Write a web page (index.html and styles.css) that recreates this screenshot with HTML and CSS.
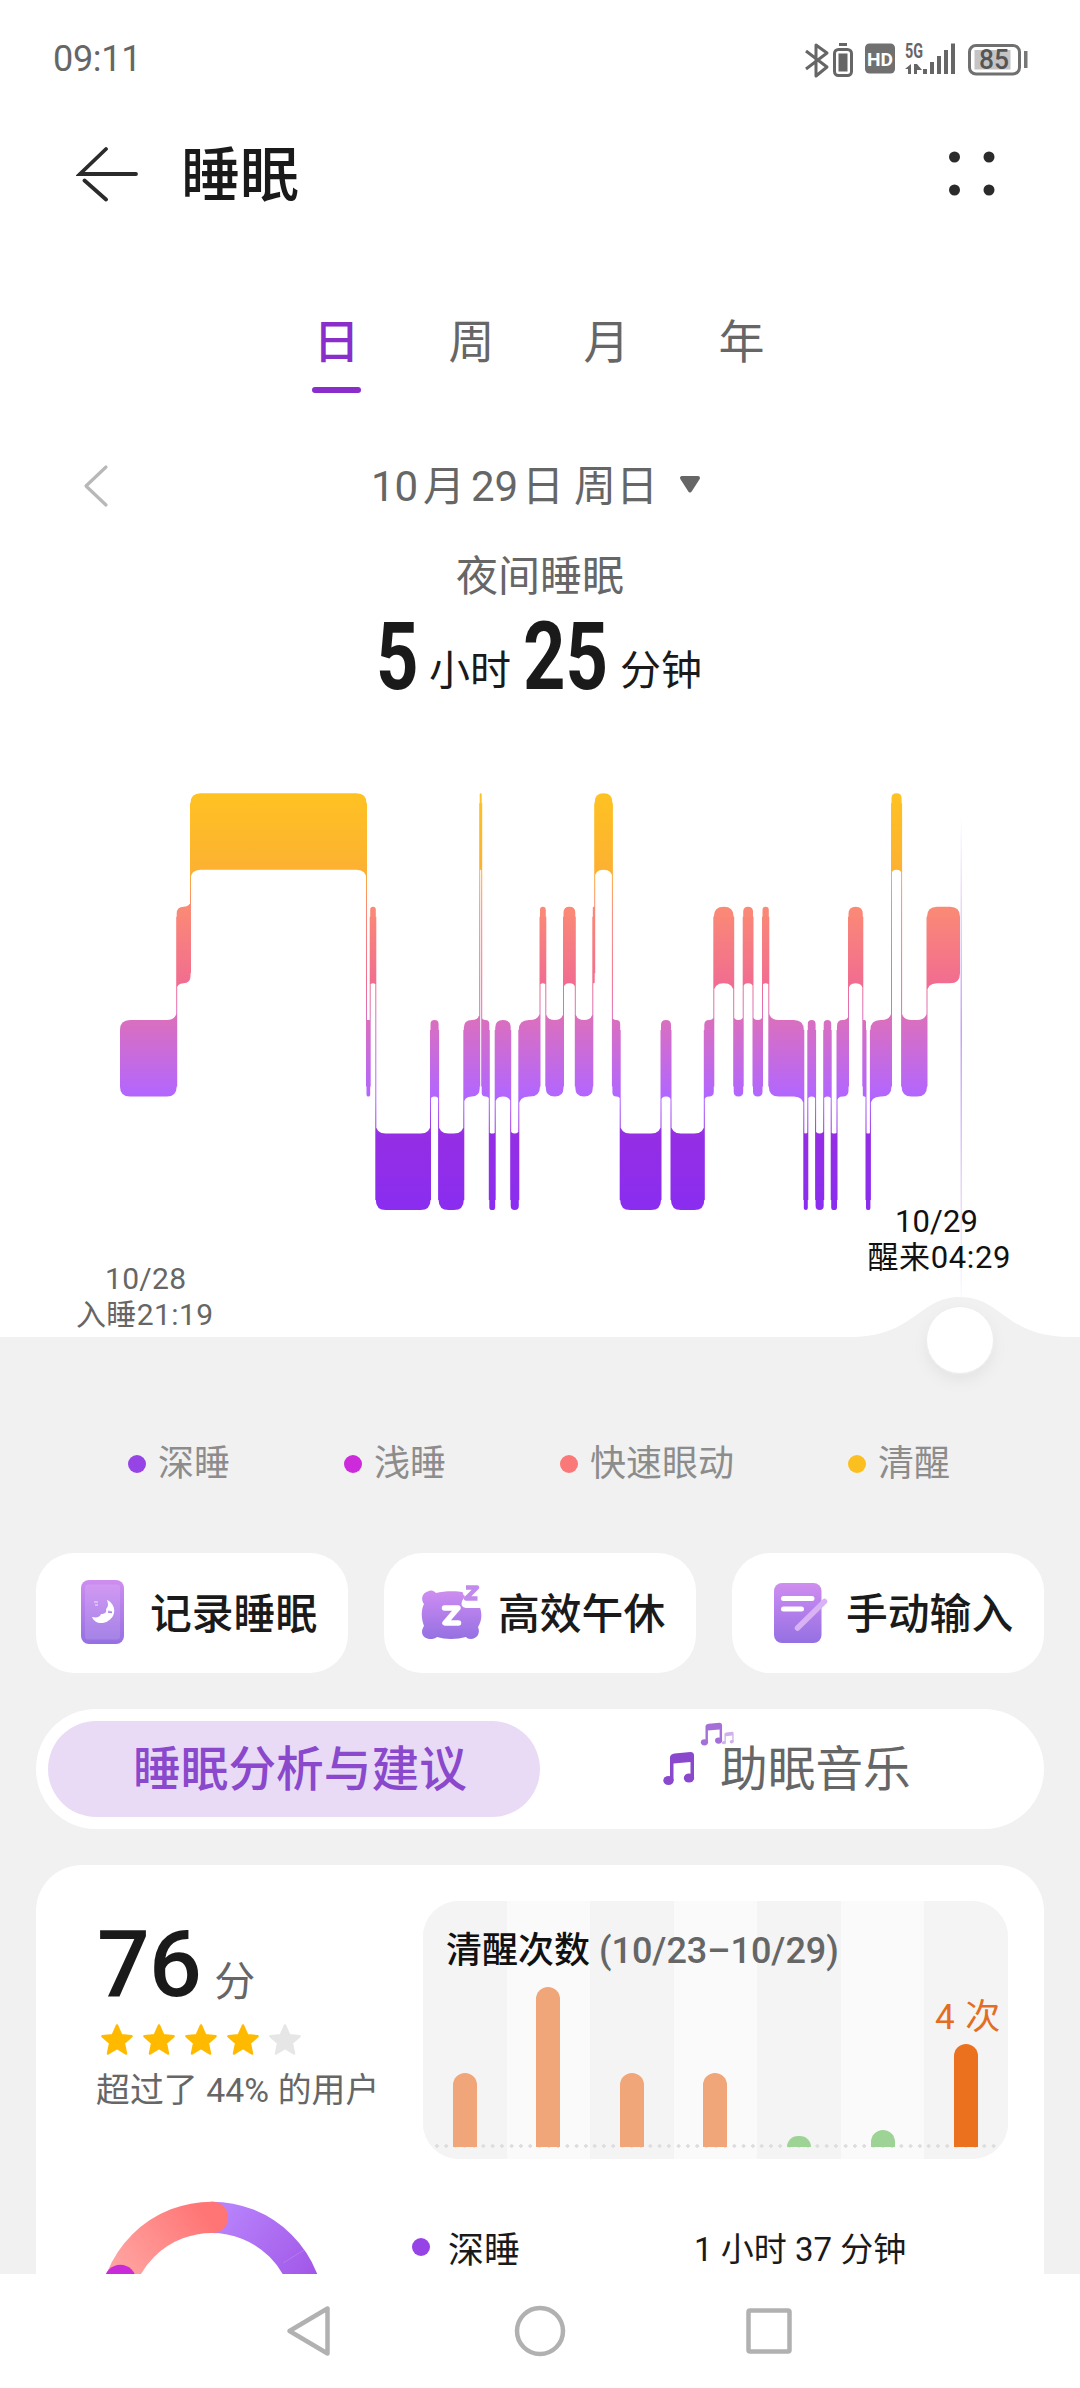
FILE: index.html
```html
<!DOCTYPE html>
<html lang="zh-CN">
<head>
<meta charset="utf-8">
<title>睡眠</title>
<link rel="stylesheet" href="styles.css">
</head>
<body>
<div class="app">
  <div class="screen">
    <header class="status">
      <span class="clock">09:11</span>
      <svg class="status-icons" width="226" height="60" viewBox="803 30 226 60">
        <g fill="none" stroke="#666" stroke-width="3" stroke-linejoin="round">
          <path d="M806 51l21 16-11 9V45l11 8-21 16"/>
          <rect x="834.5" y="49.500" width="17" height="26" rx="4"/>
          <rect x="969.500" y="45.500" width="50" height="28.500" rx="6.500" stroke="#707070"/>
        </g>
        <g fill="#666">
          <rect x="839" y="43" width="8" height="3"/>
          <rect x="838.500" y="53.500" width="9" height="18"/>
          <rect x="865" y="43.500" width="30" height="30" rx="4.500" fill="#707070"/>
          <path d="M911 64v10h-3v-5h-3zM914 64h3l5 6h-5v4h-3z"/>
          <rect x="923" y="69" width="4" height="5"/>
          <rect x="930" y="62" width="4" height="12"/>
          <rect x="937" y="56" width="4" height="18"/>
          <rect x="944" y="50" width="4" height="24"/>
          <rect x="951" y="43.500" width="4" height="30.500"/>
          <rect x="1024" y="51" width="3.500" height="17" fill="#777"/>
        </g>
        <rect x="974.500" y="50" width="36" height="19.500" fill="#c4c4c4"/>
        <text class="t-hd" x="867" y="65.500" textLength="26" lengthAdjust="spacingAndGlyphs">HD</text>
        <text class="t-5g" x="905" y="57.500" textLength="18" lengthAdjust="spacingAndGlyphs">5G</text>
        <text class="t-bat" x="979" y="69" textLength="30" lengthAdjust="spacingAndGlyphs">85</text>
      </svg>
    </header>

    <div class="titlebar">
      <svg width="64" height="60" viewBox="76 144 64 60" fill="none" stroke="#2b2b2b" stroke-width="3.800" stroke-linecap="round">
        <path d="M106 149L80 174H136M84.500 180.500L106 199.500"/>
      </svg>
      <h1>睡眠</h1>
      <svg class="more" width="48" height="48" viewBox="948 150 48 48" fill="#2b2b2b">
        <circle cx="954.500" cy="157" r="5.500"/><circle cx="989" cy="157" r="5.500"/>
        <circle cx="954.500" cy="190" r="5.500"/><circle cx="989" cy="190" r="5.500"/>
      </svg>
    </div>

    <nav class="tabs">
      <span class="tab on">日</span><span class="tab">周</span><span class="tab">月</span><span class="tab">年</span>
    </nav>

    <div class="date-row">
      <svg width="28" height="44" viewBox="82 464 28 44" fill="none" stroke="#b8b8b8" stroke-width="3.200" stroke-linecap="round" stroke-linejoin="round"><path d="M106 467L86 486L106 505"/></svg>
      <div class="date"><span>10</span><span>月</span><span>29</span><span>日</span><span class="wk">周日</span></div>
      <svg width="24" height="18" viewBox="0 0 24 18"><path d="M4 2H20L12 14.500z" fill="#666" stroke="#666" stroke-width="4" stroke-linejoin="round"/></svg>
    </div>

    <p class="kind">夜间睡眠</p>
    <div class="duration"><b class="n1">5</b><span class="u1">小时</span><b class="n2">25</b><span>分钟</span></div>

    <svg class="hypno" width="1080" height="630" viewBox="0 780 1080 630">
      <defs>
        <linearGradient id="stage" gradientUnits="userSpaceOnUse" x1="0" y1="793" x2="0" y2="1210">
          <stop offset="0" stop-color="#ffc222"/>
          <stop offset=".185" stop-color="#fcb132"/>
          <stop offset=".274" stop-color="#fb8a75"/>
          <stop offset=".456" stop-color="#f16d90"/>
          <stop offset=".545" stop-color="#da6fbf"/>
          <stop offset=".727" stop-color="#b266ff"/>
          <stop offset=".818" stop-color="#952ee4"/>
          <stop offset="1" stop-color="#8a2df0"/>
        </linearGradient>
        <linearGradient id="cursor" x1="0" y1="0" x2="0" y2="1">
          <stop offset="0" stop-color="#b58cf0" stop-opacity="0"/>
          <stop offset=".45" stop-color="#b58cf0" stop-opacity=".8"/>
          <stop offset="1" stop-color="#b58cf0" stop-opacity=".05"/>
        </linearGradient>
        <filter id="soft" x="-50%" y="-50%" width="200%" height="200%"><feDropShadow dx="0" dy="7" stdDeviation="7" flood-opacity=".05"/></filter>
      </defs>
      <path fill="#f1f1f1" d="M0 1337H850C915 1337 918 1297 960 1297S1005 1337 1070 1337H1080V1410H0z"/>
      <g id="stages" fill="url(#stage)"></g>
      <rect x="960.500" y="815" width="1.500" height="482" fill="url(#cursor)"/>
      <circle cx="960" cy="1340" r="33.500" fill="#fff" stroke="#ececec" filter="url(#soft)"/>
      <g class="t-start">
        <text x="105" y="1288.500" textLength="81">10/28</text>
        <text x="76" y="1325" textLength="137">入睡21:19</text>
      </g>
      <g class="t-end">
        <text x="895" y="1231.500" textLength="83">10/29</text>
        <text x="867.500" y="1268" textLength="143">醒来04:29</text>
      </g>
    </svg>

    <div class="lower">
      <div class="legend">
        <span><i class="dot deep"></i>深睡</span>
        <span><i class="dot light"></i>浅睡</span>
        <span><i class="dot rem"></i>快速眼动</span>
        <span><i class="dot wake"></i>清醒</span>
      </div>

      <div class="actions">
        <div class="action">
          <svg width="66" height="66" viewBox="0 0 66 66">
            <defs><linearGradient id="pu" x1="0" y1="0" x2="0" y2="1"><stop offset="0" stop-color="#cf8eee"/><stop offset=".3" stop-color="#bd84ee"/><stop offset="1" stop-color="#9570e2"/></linearGradient></defs>
            <rect x="9" y="0" width="43" height="64" rx="8" fill="url(#pu)"/>
            <rect x="13" y="4.500" width="35" height="55" rx="3" fill="#fff" opacity=".12"/>
            <path d="M35 20C44 24 45 36 36 41C30 45 22 43 20 37C25 38 28 37 29 34C33 34 35 32 34 29C37 26 36 23 35 20z" fill="#fff"/>
            <path d="M36 31l4 1M22 22h4M23 25h3" stroke="#e3caf8" stroke-width="1.500"/>
            <path d="M36 32l4 .5" stroke="#ad7fe9" stroke-width="1.500"/>
          </svg>
          <span>记录睡眠</span>
        </div>
        <div class="action">
          <svg width="66" height="66" viewBox="0 0 66 66">
            <path fill="url(#pu)" d="M9 11C12 10 14 11 16 13C25 10.500 39 10.500 47 13C52 11 59 13 59 18C59 20 58 21 58 23C63 32 62 41 58 47C61 54 56 59 51 59C48 59 47 58 46 57C37 59.500 25 59.500 17 57C12 61 2 59 2 52C2 49 3 48 4 46C1 38 1 30 4 24C1 20 1 13 9 11z"/>
            <path d="M43 5H60V24L61 28H46Q40 27 42 21L45 16Q41 14 43 5z" fill="#fff"/>
            <path d="M24.500 28H38L25 43H38.500" fill="none" stroke="#fff" stroke-width="5.500" stroke-linejoin="round" stroke-linecap="round"/>
            <path d="M46 7.500H57L46 18.500H57.500" fill="none" stroke="#c28aec" stroke-width="4.500" stroke-linejoin="round"/>
          </svg>
          <span>高效午休</span>
        </div>
        <div class="action">
          <svg width="66" height="66" viewBox="0 0 66 66">
            <rect x="6" y="3" width="47.500" height="60" rx="8" fill="url(#pu)"/>
            <path d="M15.500 18.500H44M15.500 29H33.500" stroke="#fff" stroke-width="5" stroke-linecap="round"/>
            <path d="M29.500 48L56.500 21.500" stroke="#d9b2f6" stroke-width="5.500" stroke-linecap="round"/>
          </svg>
          <span>手动输入</span>
        </div>
      </div>

      <div class="segment">
        <div class="seg on">睡眠分析与建议</div>
        <div class="seg music">
          <svg width="76" height="70" viewBox="660 1718 76 70">
            <defs>
              <g id="note"><path d="M6.500 28V4.500Q7 1.500 11 1L27 -.5Q30.500 -.3 30.500 3V26.500H27V9.500L10 11V28z"/><ellipse cx="5" cy="28" rx="5.200" ry="4.500"/><ellipse cx="25.500" cy="25.500" rx="5.200" ry="4.500"/></g>
            </defs>
            <use href="#note" transform="translate(663.500 1752.500)" fill="#8a48cc"/>
            <use href="#note" transform="translate(701 1723) scale(.69)" fill="#a56fd8"/>
            <use href="#note" transform="translate(722 1732) scale(.38)" fill="#cfb0ea"/>
          </svg>
          <span>助眠音乐</span>
        </div>
      </div>

      <section class="card">
        <div class="top">
          <div class="score">
            <div class="points"><b>76</b><span>分</span></div>
            <svg class="stars" width="210" height="34" viewBox="0 0 210 34">
              <defs><path id="star" d="M0 -14.500L4.300 -4.700L14.500 -3.800L6.800 3L9 13.500L0 8L-9 13.500L-6.800 3L-14.500 -3.800L-4.300 -4.700z" stroke-width="2.500" stroke-linejoin="round"/></defs>
              <g fill="#ffba00" stroke="#ffba00">
                <use href="#star" x="21" y="17"/><use href="#star" x="63" y="17"/><use href="#star" x="105" y="17"/><use href="#star" x="147" y="17"/>
              </g>
              <use href="#star" x="189" y="17" fill="#e6e6e6" stroke="#e6e6e6"/>
            </svg>
            <p class="rank">超过了 44% 的用户</p>
          </div>
          <div class="trend">
            <h2>清醒次数 <span>(10/23–10/29)</span></h2>
            <div class="col"><i style="height:74px"></i></div>
            <div class="col"><i style="height:160px"></i></div>
            <div class="col"><i style="height:74px"></i></div>
            <div class="col"><i style="height:74px"></i></div>
            <div class="col ok"><i style="height:11px"></i></div>
            <div class="col ok"><i style="height:17px"></i></div>
            <div class="col now"><em>4 次</em><i style="height:103px"></i></div>
          </div>
        </div>
        <div class="detail">
          <svg width="232" height="116" viewBox="96 2198 232 116">
            <defs>
              <linearGradient id="dp" gradientUnits="userSpaceOnUse" x1="225" y1="2210" x2="310" y2="2275"><stop offset="0" stop-color="#b782fb"/><stop offset="1" stop-color="#a258e8"/></linearGradient>
              <linearGradient id="dr" gradientUnits="userSpaceOnUse" x1="208" y1="2216" x2="125" y2="2275"><stop offset="0" stop-color="#ff7575"/><stop offset="1" stop-color="#ffa3a0"/></linearGradient>
            </defs>
            <g fill="none" stroke-width="31.300">
              <path d="M211.800 2216.300A97.300 97.300 0 0 1 309.100 2313.600" stroke="url(#dp)"/>
              <path d="M114.500 2313.600A97.300 97.300 0 0 1 212.500 2216.300" stroke="url(#dr)"/>
            </g>
            <circle cx="212.500" cy="2216.400" r="15.650" fill="url(#dr)"/>
            <path d="M283 2262L304 2249" stroke="#b678f0"/>
            <circle cx="120.300" cy="2279.300" r="15.650" fill="#c92bd8"/>
          </svg>
          <div class="row"><i class="dot deep"></i><span class="name">深睡</span><span class="val">1 小时 37 分钟</span></div>
        </div>
      </section>
    </div>
  </div>

  <footer class="sysnav">
    <svg width="520" height="60" viewBox="280 2301 520 60" fill="none" stroke="#b1b1b1" stroke-width="4.500" stroke-linejoin="round">
      <path d="M289.500 2331L327.500 2308.500V2353.500z"/>
      <circle cx="540" cy="2331" r="23"/>
      <rect x="748.500" y="2310.500" width="41" height="41" rx="1.500"/>
    </svg>
  </footer>
</div>
<script src="chart.js"></script>
</body>
</html>
```
FILE: styles.css
```css
* { box-sizing: border-box; margin: 0; padding: 0; }
body {
  font-family: Roboto, "Noto Sans CJK SC", sans-serif;
  background: #fff;
  color: #1a1a1a;
}
svg { display: block; flex: none; }
svg text { font-family: Roboto, "Noto Sans CJK SC", sans-serif; }
i, em { font-style: normal; }

.app { width: 1080px; height: 2388px; display: flex; flex-direction: column; overflow: hidden; }
.screen { height: 2274px; flex: none; overflow: hidden; display: flex; flex-direction: column; }
.screen > * { flex: none; }

.status { height: 120px; padding: 0 51px 2px 53px; display: flex; align-items: center; justify-content: space-between; }
.status-icons { margin-top: 2px; }
.clock { font-size: 36px; letter-spacing: -.3px; color: #666; }
.t-hd { font-size: 19px; font-weight: 700; fill: #fff; }
.t-5g { font-size: 20px; font-weight: 700; fill: #666; }
.t-bat { font-size: 27px; font-weight: 500; fill: #555; }

.titlebar { height: 110px; padding: 0 84px 2px 76px; display: flex; align-items: center; }
.titlebar h1 { flex: 1; margin-left: 41px; font-size: 59px; font-weight: 500; line-height: 60px; padding-top: 4px; }

.tabs { height: 163px; padding: 80px 0 0 269px; display: flex; }
.tab { width: 135px; height: 83px; text-align: center; font-size: 46px; line-height: 65px; color: #666; }
.tab.on { color: #8a2ecb; font-weight: 500; }
.tab.on::after { content: ""; display: block; width: 49px; height: 6px; margin: 12px auto 0; border-radius: 3px; background: #8a2ecb; }

.date-row { height: 186px; padding: 0 0 0 82px; display: flex; align-items: center; }
.date { display: flex; margin-left: 261px; width: 290px; font-size: 42px; line-height: 50px; color: #666; white-space: nowrap; padding-top: 2px; }
.date span:nth-child(1) { width: 52px; }
.date span:nth-child(2) { width: 48px; }
.date span:nth-child(3) { width: 51px; }
.date .wk { margin-left: 10px; }
.date-row svg:last-child { margin-left: 17px; margin-top: -3px; }

.kind { height: 36px; margin-top: -20px; text-align: center; font-size: 42px; line-height: 36px; color: #666; }
.duration { height: 185px; padding-left: 376px; display: flex; align-items: baseline; font-size: 41px; line-height: 115px; }
.duration b { font-size: 95px; font-weight: 700; transform: translateY(4px) scaleX(.78); transform-origin: left; }
.n1 { width: 53px; }
.u1 { width: 94px; }
.n2 { width: 97px; }

.hypno { height: 630px; margin-bottom: -1px; }
.t-start { font-size: 30px; fill: #666; }
.t-end { font-size: 31px; fill: #111; }

.lower { background: #f1f1f1; padding: 0 36px; height: 865px; }
.legend { height: 144px; padding: 34px 0 0 92px; display: grid; grid-template-columns: 216px 216px 288px auto; font-size: 36px; line-height: 45px; color: #8c8c8c; }
.legend span { display: flex; align-items: center; gap: 12px; height: 42px; }
.dot { width: 18px; height: 18px; border-radius: 50%; flex: none; }
.deep { background: #9644e6; }
.light { background: #cc2adb; }
.rem { background: #fa7878; }
.wake { background: #fbc01f; }

.actions { display: grid; grid-template-columns: repeat(3, 312px); gap: 36px; }
.action { height: 120px; border-radius: 38px; background: #fff; display: flex; align-items: center; padding-left: 36px; gap: 12px; font-size: 41.800px; font-weight: 500; line-height: 50px; white-space: nowrap; }
.action span { padding-top: 3px; }

.segment { margin-top: 36px; height: 120px; border-radius: 60px; background: #fff; padding: 12px; display: flex; font-size: 47.700px; line-height: 99px; }
.seg { height: 96px; }
.seg.on { width: 492px; border-radius: 48px; background: #e9dbf5; color: #8a48cc; font-weight: 500; padding-left: 85px; }
.music { display: flex; padding: 0 0 0 120px; color: #666; white-space: nowrap; }
.music svg { margin-top: -3px; margin-right: -16px; }

.card { margin-top: 36px; height: 600px; background: #fff; border-radius: 46px; padding: 36px 36px 0 60px; }
.top { display: flex; height: 258px; }
.score { width: 327px; }
.points { height: 116px; display: flex; align-items: baseline; line-height: 128px; padding-left: 1px; font-size: 41px; color: #666; }
.points b { font-size: 93px; font-weight: 500; color: #1a1a1a; margin-right: 13px; letter-spacing: -.8px; }
.stars { margin-top: 6px; }
.rank { margin-top: 9px; font-size: 33.800px; line-height: 49px; letter-spacing: .1px; color: #666; white-space: nowrap; }

.trend { width: 585px; height: 258px; border-radius: 36px; overflow: hidden; position: relative; display: grid; grid-template-columns: repeat(7, 1fr); background: #f4f4f4; }
.trend h2 { position: absolute; left: 23px; top: 27px; font-size: 36px; line-height: 47px; font-weight: 500; color: #111; white-space: nowrap; }
.trend h2 span { color: #666; }
.col { display: flex; flex-direction: column; align-items: center; justify-content: flex-end; padding-bottom: 12px; background: radial-gradient(circle, #ddd 1.500px, transparent 2px) 0 243px / 9.286px 4px repeat-x #f4f4f4; }
.col:nth-child(odd) { background-color: #fafafa; }
.col i { width: 24px; border-radius: 12px 12px 0 0; background: #f0a678; }
.col.ok i { background: #9dd395; }
.col.now i { background: #ec711f; }
.col em { font-size: 35px; line-height: 42px; margin-bottom: 5px; margin-left: 3px; color: #e36d22; white-space: nowrap; word-spacing: 2px; }

.detail { display: flex; }
.detail > svg { margin: 40px 0 0 0; }
.row { display: flex; align-items: center; height: 42px; margin: 67px 0 0 84px; font-size: 36px; }
.name { margin-left: 18px; width: 246px; }
.val { font-size: 33px; white-space: nowrap; }

.sysnav { height: 114px; flex: none; background: #fff; display: flex; align-items: center; justify-content: center; }
```
FILE: chart.js
```js
// Sleep stages: 0 awake, 1 REM, 2 light, 3 deep. Each entry is [end x, stage].
const startX = 120;
const stages = [
  [176.7, 2], [190.5, 1], [366.5, 0], [370.2, 2], [375.8, 1], [430.5, 3], [438.6, 2],
  [463.8, 3], [479.7, 2], [481.7, 0], [489.3, 2], [495.2, 3], [510.7, 2], [518.8, 3],
  [540, 2], [545.8, 1], [563.5, 2], [575.3, 1], [592.8, 2], [594.7, 1], [612.4, 0],
  [620.2, 2], [661, 3], [671, 2], [704.3, 3], [713.8, 2], [733.7, 1], [743.2, 2],
  [753, 1], [762.5, 2], [768.8, 1], [803.8, 2], [807.8, 3], [815.6, 2], [823.7, 3],
  [831.2, 2], [837, 3], [848.5, 2], [862.8, 1], [866, 2], [870.4, 3], [891.5, 2],
  [901.6, 0], [927, 2], [960, 1]
];
const stageTop = [793.3, 906.7, 1020, 1133.6];
const stageHeight = 76.5;

function drawStages() {
  const group = document.getElementById("stages");
  let d = "";
  let x0 = startX;
  stages.forEach(([x1, s], i) => {
    const prev = i ? stages[i - 1][1] : s;
    const next = i < stages.length - 1 ? stages[i + 1][1] : s;
    const t = stageTop[s], b = t + stageHeight;
    const r = Math.min(10, (x1 - x0) / 2);
    const tl = t + (prev < s ? -r : r), tr = t + (next < s ? -r : r);
    const bl = b + (prev > s ? r : -r), br = b + (next > s ? r : -r);
    d += `M${x0} ${tl}Q${x0} ${t} ${x0 + r} ${t}H${x1 - r}Q${x1} ${t} ${x1} ${tr}` +
         `V${br}Q${x1} ${b} ${x1 - r} ${b}H${x0 + r}Q${x0} ${b} ${x0} ${bl}Z`;
    if (next !== s) {
      const a = stageTop[Math.min(s, next)] + 10;
      const z = stageTop[Math.max(s, next)] + stageHeight - 10;
      // same winding as the blocks, so overlaps stay filled
      d += `M${x1 - 0.5} ${a}H${x1 + 0.5}V${z}H${x1 - 0.5}Z`;
    }
    x0 = x1;
  });
  const path = document.createElementNS("http://www.w3.org/2000/svg", "path");
  path.setAttribute("d", d);
  group.appendChild(path);
}
drawStages();
```
